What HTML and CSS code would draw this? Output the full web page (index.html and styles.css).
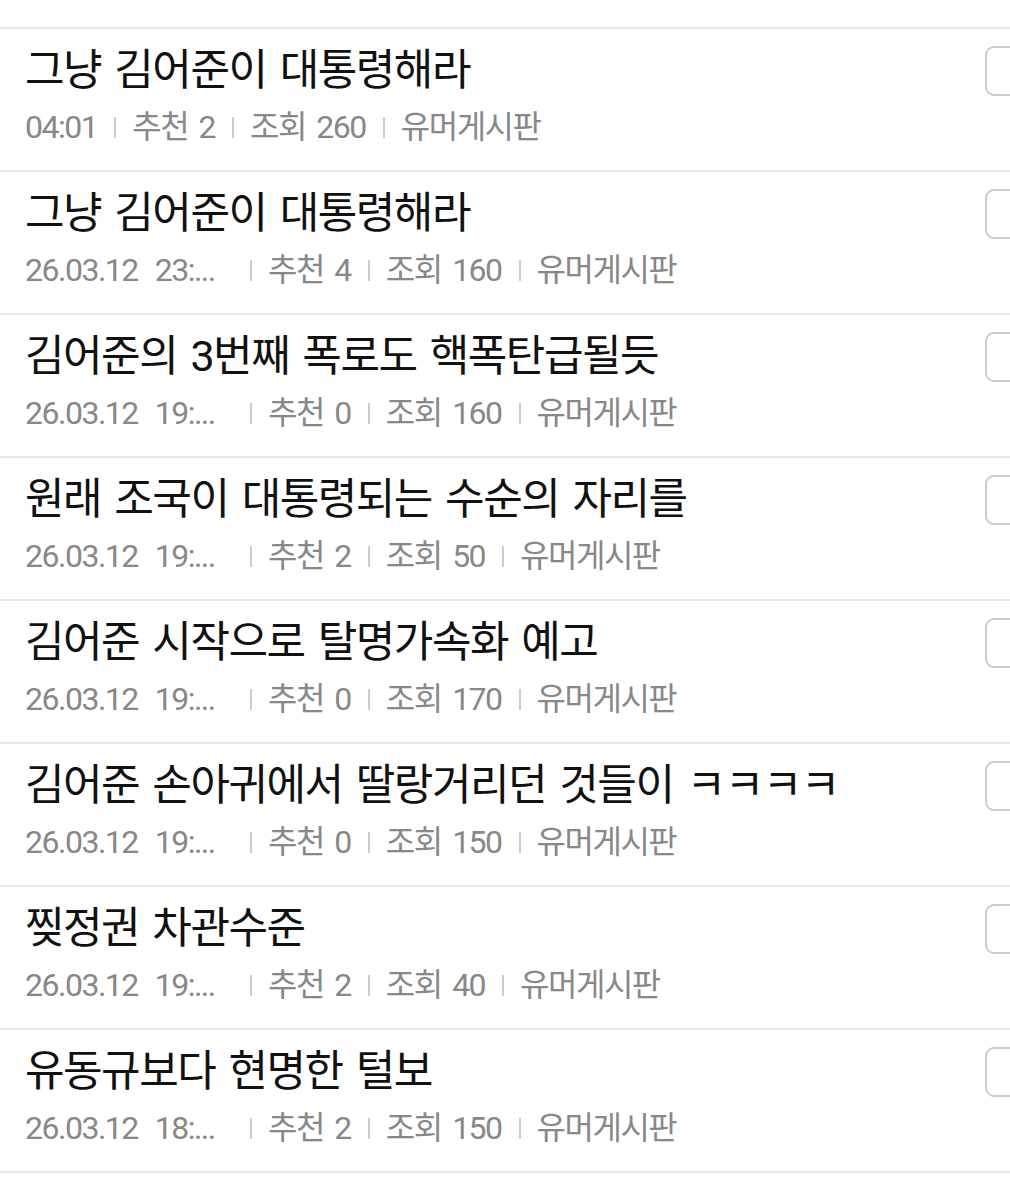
FILE: index.html
```html
<!DOCTYPE html>
<html lang="ko">
<head>
<meta charset="utf-8">
<link rel="stylesheet" href="styles.css">
</head>
<body>
<div class="list">
  <div class="item">
    <div class="text">
      <div class="title">그냥 김어준이 대통령해라</div>
      <div class="meta"><span class="date short">04:01</span><i class="sep"></i><span>추천 2</span><i class="sep"></i><span>조회 260</span><i class="sep"></i><span>유머게시판</span></div>
    </div>
    <div class="check"></div>
  </div>
  <div class="item">
    <div class="text">
      <div class="title">그냥 김어준이 대통령해라</div>
      <div class="meta"><span class="date">26.03.12&nbsp; 23:...</span><i class="sep"></i><span>추천 4</span><i class="sep"></i><span>조회 160</span><i class="sep"></i><span>유머게시판</span></div>
    </div>
    <div class="check"></div>
  </div>
  <div class="item">
    <div class="text">
      <div class="title">김어준의 3번째 폭로도 핵폭탄급될듯</div>
      <div class="meta"><span class="date">26.03.12&nbsp; 19:...</span><i class="sep"></i><span>추천 0</span><i class="sep"></i><span>조회 160</span><i class="sep"></i><span>유머게시판</span></div>
    </div>
    <div class="check"></div>
  </div>
  <div class="item">
    <div class="text">
      <div class="title">원래 조국이 대통령되는 수순의 자리를</div>
      <div class="meta"><span class="date">26.03.12&nbsp; 19:...</span><i class="sep"></i><span>추천 2</span><i class="sep"></i><span>조회 50</span><i class="sep"></i><span>유머게시판</span></div>
    </div>
    <div class="check"></div>
  </div>
  <div class="item">
    <div class="text">
      <div class="title">김어준 시작으로 탈명가속화 예고</div>
      <div class="meta"><span class="date">26.03.12&nbsp; 19:...</span><i class="sep"></i><span>추천 0</span><i class="sep"></i><span>조회 170</span><i class="sep"></i><span>유머게시판</span></div>
    </div>
    <div class="check"></div>
  </div>
  <div class="item">
    <div class="text">
      <div class="title">김어준 손아귀에서 딸랑거리던 것들이 ㅋㅋㅋㅋ</div>
      <div class="meta"><span class="date">26.03.12&nbsp; 19:...</span><i class="sep"></i><span>추천 0</span><i class="sep"></i><span>조회 150</span><i class="sep"></i><span>유머게시판</span></div>
    </div>
    <div class="check"></div>
  </div>
  <div class="item">
    <div class="text">
      <div class="title">찢정권 차관수준</div>
      <div class="meta"><span class="date">26.03.12&nbsp; 19:...</span><i class="sep"></i><span>추천 2</span><i class="sep"></i><span>조회 40</span><i class="sep"></i><span>유머게시판</span></div>
    </div>
    <div class="check"></div>
  </div>
  <div class="item">
    <div class="text">
      <div class="title">유동규보다 현명한 털보</div>
      <div class="meta"><span class="date">26.03.12&nbsp; 18:...</span><i class="sep"></i><span>추천 2</span><i class="sep"></i><span>조회 150</span><i class="sep"></i><span>유머게시판</span></div>
    </div>
    <div class="check"></div>
  </div>
</div>
</body>
</html>
```

FILE: styles.css
```css
html, body {
  margin: 0;
  padding: 0;
  background: #ffffff;
}
body {
  width: 1010px;
  height: 1187px;
  overflow: hidden;
  font-family: Roboto, "Noto Sans CJK KR", sans-serif;
}
.list {
  padding-top: 27px;
  display: flex;
  flex-direction: column;
}
.item {
  height: 141px;
  border-top: 2px solid #e8e8e8;
  display: flex;
  justify-content: space-between;
  align-items: flex-start;
  overflow: hidden;
}
.item:last-child {
  border-bottom: 2px solid #e8e8e8;
}
.text {
  padding-left: 25px;
  padding-top: 17px;
  display: flex;
  flex-direction: column;
  gap: 13px;
}
.title {
  font-size: 43px;
  line-height: 48px;
  height: 48px;
  color: #111111;
  letter-spacing: -1.5px;
  word-spacing: 4px;
  white-space: nowrap;
}
.meta {
  display: flex;
  align-items: center;
  font-size: 32px;
  line-height: 40px;
  height: 40px;
  color: #888888;
  white-space: nowrap;
  letter-spacing: -1.5px;
  word-spacing: 4px;
}
.date {
  width: 208px;
  word-spacing: 2px;
}
.date.short {
  width: auto;
}
.sep {
  display: block;
  width: 2px;
  height: 21px;
  background: #cccccc;
  margin: 0 16px 0 17px;
}
.check {
  width: 46px;
  height: 46px;
  border: 2px solid #cccccc;
  border-radius: 9px;
  margin-top: 17px;
  margin-right: -25px;
  flex: none;
}
```
